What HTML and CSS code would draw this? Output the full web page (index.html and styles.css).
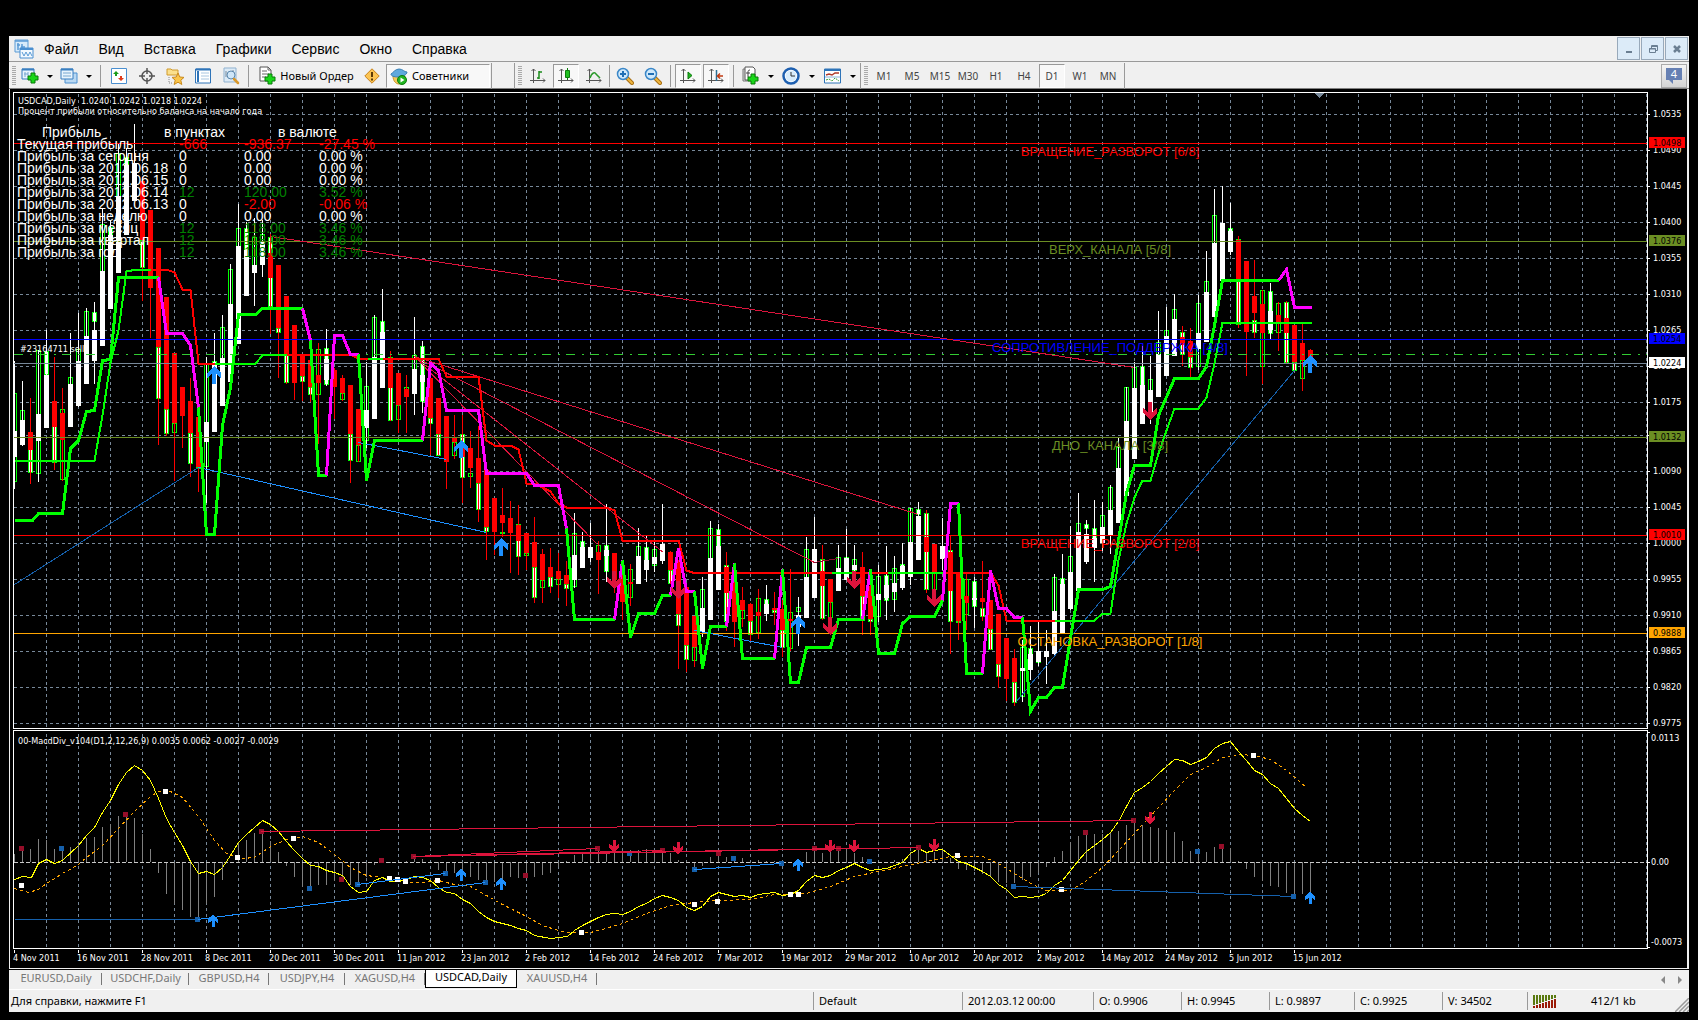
FILE: index.html
```html
<!DOCTYPE html>
<html lang="ru">
<head>
<meta charset="utf-8">
<title>USDCAD,Daily</title>
<link rel="stylesheet" href="styles.css">
</head>
<body>
<svg class="defs" width="0" height="0" aria-hidden="true">
  <defs>
    <symbol id="plus" viewBox="0 0 12 12"><path d="M4 1h4v3h3v4H8v3H4V8H1V4h3z" fill="#19d619" stroke="#087a08"/></symbol>
    <symbol id="axes" viewBox="0 0 16 16"><path d="M3.500 1v14M0 12.500h15M1.500 3l2-2 2 2M13 10.500l2 2-2 2" fill="none" stroke="#555"/></symbol>
    <symbol id="lens" viewBox="0 0 18 18"><path d="M11 11l5 5" stroke="#a86e12" stroke-width="4" stroke-linecap="round"/><path d="M11 11l5 5" stroke="#f0b840" stroke-width="2" stroke-linecap="round"/><circle cx="7" cy="7" r="5.500" fill="#cfe9fb" stroke="#3a87c8" stroke-width="1.500"/></symbol>
  </defs>
</svg>
<div class="window">
  <header class="menubar">
    <svg class="logo" viewBox="0 0 20 20"><path d="M1 1h13v12H1z" fill="#d8ebfa" stroke="#5a9bd5"/><path d="M1 2h13M4 4v7M8 5v6M3 6h3M7 8h4" stroke="#5a9bd5" stroke-width="1.500"/><path d="M6 9h13v10H6z" fill="#f2f9ff" stroke="#4a8fd0"/><path d="M6 10h13" stroke="#4a8fd0" stroke-width="2"/><path d="M8 13l2 4 2-4 2 4 2-4 2 4" fill="none" stroke="#5a9bd5"/></svg>
    <nav class="menu">
      <button>Файл</button><button>Вид</button><button>Вставка</button><button>Графики</button><button>Сервис</button><button>Окно</button><button>Справка</button>
    </nav>
    <div class="winbtns">
      <button aria-label="Свернуть"><svg width="22" height="22" viewBox="0 0 22 22"><path d="M8 14h6" stroke="#6b7f92" stroke-width="2"/></svg></button>
      <button aria-label="Восстановить"><svg width="22" height="22" viewBox="0 0 22 22"><path d="M9.500 10V7.500h6v5h-2M7.500 10.500h6v4h-6zM7 11h7M9 8.500h7" fill="none" stroke="#6b7f92"/></svg></button>
      <button aria-label="Закрыть"><svg width="22" height="22" viewBox="0 0 22 22"><path d="M8 8l6 6M14 8l-6 6" stroke="#6b7f92" stroke-width="2.500"/></svg></button>
    </div>
  </header>

  <div class="toolbar">
    <i class="grip"></i>
    <button class="tb slim" aria-label="Новый график"><svg width="18" height="18" viewBox="0 0 18 18"><path d="M1 2h12v10H1z" fill="#e8f4fd" stroke="#3a7fc0"/><path d="M1 2.500h12" stroke="#3a7fc0" stroke-width="2"/><path d="M4 5v5M3 7h4M7 5v4" stroke="#79a7d0"/><use href="#plus" x="6" y="5" width="12" height="12"/></svg></button><button class="drop" aria-label="Список"></button>
    <button class="tb slim" aria-label="Профили"><svg width="18" height="18" viewBox="0 0 18 18"><path d="M5 6h12v10H5z" fill="#b9d8f2" stroke="#4a8fd0"/><path d="M1 2h12v10H1z" fill="#e8f4fd" stroke="#3a7fc0"/><path d="M1 2.500h12" stroke="#3a7fc0" stroke-width="2"/><path d="M3 6h8M3 9h8" stroke="#79a7d0"/></svg></button><button class="drop" aria-label="Список"></button>
    <i class="sep first"></i>
    <button class="tb" aria-label="Обзор рынка"><svg width="16" height="18" viewBox="0 0 16 18"><path d="M.5 1.500h15v15H.5z" fill="#fff" stroke="#4a8fd0"/><path d="M5 4l3 3H6v2H4V7H2z" fill="#1a9c1a"/><path d="M10 14l-3-3h2V9h2v2h2z" fill="#e03c1c"/></svg></button>
    <button class="tb" aria-label="Окно данных"><svg width="16" height="16" viewBox="0 0 16 16"><circle cx="8" cy="8" r="5" fill="none" stroke="#555" stroke-width="1.500"/><path d="M8 0v6M8 10v6M0 8h6M10 8h6" stroke="#555" stroke-width="1.500"/></svg></button>
    <button class="tb" aria-label="Навигатор"><svg width="18" height="18" viewBox="0 0 18 18"><path d="M1 2h4l1 1h6v5H1z" fill="#fbe08c" stroke="#d09a2c"/><path d="M3 10v6h4" fill="none" stroke="#888" stroke-dasharray="1 1"/><path d="M12 6l1.800 4 4.200.400-3.200 2.800 1 4.300-3.800-2.300-3.800 2.300 1-4.300L6 10.400l4.200-.400z" fill="#fbc64a" stroke="#c98a1c"/></svg></button>
    <button class="tb" aria-label="Терминал"><svg width="16" height="16" viewBox="0 0 16 16"><path d="M.5 1h15v14H.5z" fill="#fff" stroke="#2f74b8"/><path d="M1 1.500h14" stroke="#2f74b8" stroke-width="2"/><path d="M3 3v11" stroke="#2f74b8" stroke-width="2"/><path d="M6 5h8M6 8h8M6 11h8" stroke="#a9c6e0"/></svg></button>
    <button class="tb" aria-label="Тестер стратегий"><svg width="18" height="18" viewBox="0 0 18 18"><path d="M2 1h12v14H2z" fill="#dceaf6" stroke="#8fb1cf"/><path d="M4 4v6M11 3v5" stroke="#789"/><circle cx="9" cy="8" r="4" fill="#cfe6f8" stroke="#5b87ad"/><path d="M12 12l4 4" stroke="#d8982c" stroke-width="2.500" stroke-linecap="round"/></svg></button>
    <i class="sep"></i>
    <button class="tb order"><svg width="18" height="19" viewBox="0 0 18 19"><path d="M2 1h8l3 3v11H2z" fill="#fff" stroke="#555"/><path d="M4 5h5M4 8h7M4 11h4M10 1v3h3" fill="none" stroke="#666"/><use href="#plus" x="6" y="7" width="12" height="12"/></svg>Новый Ордер</button>
    <button class="tb slim" aria-label="Редактор"><svg width="16" height="16" viewBox="0 0 16 16"><path d="M8 .8L15.200 8 8 15.200.800 8z" fill="#fbc453" stroke="#c8821a"/><path d="M8 4v5M8 10.500v2" stroke="#5b3a08" stroke-width="2"/></svg></button>
    <button class="tb experts pressed"><svg width="18" height="18" viewBox="0 0 18 18"><path d="M3 9c0 5 3 8 6 8s6-3 6-8z" fill="#f4c95a" stroke="#c8962c"/><path d="M1 7c2-1 4-5 8-5s5 3 8 3c0 3-5 5-9 5S1 9 1 7z" fill="#5fa9dd" stroke="#3a80b5"/><circle cx="12" cy="13" r="4.500" fill="#22b522" stroke="#0c7d0c"/><path d="M10.500 10.500v5l4-2.500z" fill="#fff"/></svg>Советники</button>
    <i class="line"></i><i class="blank"></i><i class="line"></i>
    <i class="grip"></i>
    <button class="tb" aria-label="Бары"><svg width="16" height="16" viewBox="0 0 16 16"><use href="#axes" width="16" height="16"/><path d="M9 3v8M9 4h3M7 10h2" stroke="#1a8a1a" stroke-width="1.500"/></svg></button>
    <button class="tb pressed" aria-label="Свечи"><svg width="16" height="16" viewBox="0 0 16 16"><use href="#axes" width="16" height="16"/><path d="M9.500 0v12" stroke="#0b7d0b"/><path d="M7.500 2.500h4v7h-4z" fill="#1fc01f" stroke="#0b7d0b"/></svg></button>
    <button class="tb" aria-label="Линия"><svg width="16" height="16" viewBox="0 0 16 16"><use href="#axes" width="16" height="16"/><path d="M4 10c2-6 5-6 6-4l4 4" fill="none" stroke="#2b9a2b" stroke-width="1.500"/></svg></button>
    <i class="sep tight"></i>
    <button class="tb" aria-label="Увеличить"><svg width="18" height="18" viewBox="0 0 18 18"><use href="#lens" width="18" height="18"/><path d="M4 7h6M7 4v6" stroke="#1f6fb5" stroke-width="2"/></svg></button>
    <button class="tb" aria-label="Уменьшить"><svg width="18" height="18" viewBox="0 0 18 18"><use href="#lens" width="18" height="18"/><path d="M4 7h6" stroke="#1f6fb5" stroke-width="2"/></svg></button>
    <i class="sep"></i>
    <button class="tb pressed" aria-label="Автопрокрутка"><svg width="16" height="16" viewBox="0 0 16 16"><use href="#axes" width="16" height="16"/><path d="M8 4v7l4-3.500z" fill="#22b522" stroke="#0c7d0c"/></svg></button>
    <button class="tb pressed" aria-label="Сдвиг графика"><svg width="16" height="16" viewBox="0 0 16 16"><use href="#axes" width="16" height="16"/><path d="M8.500 2v11" stroke="#2c6f94" stroke-width="1.500"/><path d="M15 8h-5M12 5.500L9.500 8l2.500 2.500" fill="none" stroke="#c03a12" stroke-width="1.500"/></svg></button>
    <i class="sep"></i>
    <button class="tb mid" aria-label="Индикаторы"><svg width="18" height="19" viewBox="0 0 18 19"><path d="M2 3h8v12H2z" fill="#ddd" stroke="#777"/><path d="M4 1h8l2 2v11H4z" fill="#fff" stroke="#555"/><path d="M9 4c-2 0-2 1-2 3v4M5 7h4" fill="none" stroke="#444"/><use href="#plus" x="6" y="7" width="12" height="12"/></svg></button><button class="drop" aria-label="Список"></button>
    <button class="tb mid" aria-label="Периоды"><svg width="18" height="18" viewBox="0 0 18 18"><circle cx="9" cy="9" r="7.500" fill="#fff" stroke="#1d5fb0" stroke-width="2.500"/><circle cx="9" cy="9" r="5.500" fill="#d8ecfb"/><path d="M9 5v4h4" fill="none" stroke="#333"/></svg></button><button class="drop" aria-label="Список"></button>
    <button class="tb mid" aria-label="Шаблоны"><svg width="17" height="16" viewBox="0 0 17 16"><path d="M.5 1h16v14H.5z" fill="#fff" stroke="#2f74b8"/><path d="M1 2h15" stroke="#2f74b8" stroke-width="2"/><path d="M2 7l3-1 3 1 3-2 4 0" fill="none" stroke="#b03a2a" stroke-width="1.500"/><path d="M2 12l3-1 3 2 3-3 4 3" fill="none" stroke="#3aa03a" stroke-dasharray="2 1"/><path d="M1 9h15" stroke="#8ab2da"/></svg></button><button class="drop" aria-label="Список"></button>
    <i class="line"></i>
    <i class="grip"></i>
    <div class="frames">
      <button>M1</button><button>M5</button><button>M15</button><button>M30</button><button>H1</button><button>H4</button><button class="pressed">D1</button><button>W1</button><button>MN</button>
    </div>
    <i class="line"></i>
    <button class="chat" aria-label="Сообщения: 4"><svg width="18" height="18" viewBox="0 0 18 18"><path d="M1 1h16v12H8v4l-4-4H1z" fill="#6680b3"/><text x="9" y="11" text-anchor="middle" class="chatnum">4</text></svg></button>
  </div>

  <main class="charts">
    <section class="pane price">
      <svg class="plot" id="price"></svg>
      <div class="quotes">USDCAD,Daily&nbsp; 1.0240 1.0242 1.0218 1.0224<br>Процент прибыли относительно баланса на начало года</div>
      <div class="profit">
        <div class="profit-head"><span>Прибыль</span><span>в пунктах</span><span>в валюте</span></div>
        <table>
          <tr><th>Текущая прибыль</th><td class="neg">-666</td><td class="neg">-936.37</td><td class="neg">-27.45 %</td></tr>
          <tr><th>Прибыль за сегодня</th><td>0</td><td>0.00</td><td>0.00 %</td></tr>
          <tr><th>Прибыль за 2012.06.18</th><td>0</td><td>0.00</td><td>0.00 %</td></tr>
          <tr><th>Прибыль за 2012.06.15</th><td>0</td><td>0.00</td><td>0.00 %</td></tr>
          <tr><th>Прибыль за 2012.06.14</th><td class="pos">12</td><td class="pos">120.00</td><td class="pos">3.52 %</td></tr>
          <tr><th>Прибыль за 2012.06.13</th><td>0</td><td class="neg">-2.00</td><td class="neg">-0.06 %</td></tr>
          <tr><th>Прибыль за неделю</th><td>0</td><td>0.00</td><td>0.00 %</td></tr>
          <tr><th>Прибыль за месяц</th><td class="pos">12</td><td class="pos">118.00</td><td class="pos">3.46 %</td></tr>
          <tr><th>Прибыль за квартал</th><td class="pos">12</td><td class="pos">118.00</td><td class="pos">3.46 %</td></tr>
          <tr><th>Прибыль за год</th><td class="pos">12</td><td class="pos">118.00</td><td class="pos">3.46 %</td></tr>
        </table>
      </div>
    </section>
    <svg class="scale price-scale" id="priceScale"></svg>
    <section class="pane macd">
      <svg class="plot" id="macd"></svg>
      <div class="quotes">00-MacdDiv_v104(D1,2,12,26,9) 0.0035 0.0062 -0.0027 -0.0029</div>
    </section>
    <svg class="scale macd-scale" id="macdScale"></svg>
    <div class="dates">
      <span>4 Nov 2011</span><span>16 Nov 2011</span><span>28 Nov 2011</span><span>8 Dec 2011</span><span>20 Dec 2011</span><span>30 Dec 2011</span><span>11 Jan 2012</span><span>23 Jan 2012</span><span>2 Feb 2012</span><span>14 Feb 2012</span><span>24 Feb 2012</span><span>7 Mar 2012</span><span>19 Mar 2012</span><span>29 Mar 2012</span><span>10 Apr 2012</span><span>20 Apr 2012</span><span>2 May 2012</span><span>14 May 2012</span><span>24 May 2012</span><span>5 Jun 2012</span><span>15 Jun 2012</span>
    </div>
  </main>

  <nav class="tabs">
    <button class="w92">EURUSD,Daily</button><button class="w87">USDCHF,Daily</button><button class="w80">GBPUSD,H4</button><button class="w76">USDJPY,H4</button><button class="w80">XAGUSD,H4</button><button class="w92 active">USDCAD,Daily</button><button class="w80">XAUUSD,H4</button>
    <div class="scroll"><button aria-label="Влево"><svg width="5" height="8" viewBox="0 0 5 8"><path d="M4 0v8L0 4z" fill="#888"/></svg></button><button aria-label="Вправо"><svg width="5" height="8" viewBox="0 0 5 8"><path d="M1 0v8l4-4z" fill="#888"/></svg></button></div>
  </nav>
  <footer class="status">
    <span class="help">Для справки, нажмите F1</span>
    <span class="c148">Default</span><span class="c130">2012.03.12 00:00</span><span class="c88">O: 0.9906</span><span class="c88">H: 0.9945</span><span class="c84">L: 0.9897</span><span class="c88">C: 0.9925</span><span class="c84">V: 34502</span>
    <span class="net"><svg id="signal" width="24" height="13"></svg>412/1 kb</span>
    <svg class="resize" width="14" height="14" viewBox="0 0 14 14"><path d="M0 14L14 0M4 14L14 4M8 14l6-6M12 14l2-2" stroke="#999" stroke-width="1.500"/></svg>
  </footer>
</div>
<script src="chart.js"></script>
</body>
</html>
```
FILE: styles.css
```css
* { box-sizing: border-box; }
body { margin: 0; padding: 36px 9px 9px; background: #000; font: 11px/14px "Noto Sans", Tahoma, sans-serif; color: #000; }
button { margin: 0; padding: 0; border: 0; background: none; font: inherit; color: inherit; }
.defs { position: absolute; }
svg { display: block; flex: none; }
.window { background: #f0f0f0; }

.menubar { display: flex; align-items: center; height: 26px; border-bottom: 1px solid #999; }
.logo { width: 20px; height: 20px; margin-left: 5px; }
.menu { display: flex; flex: 1; font: 14px/20px "Liberation Sans", Arial, sans-serif; }
.menu button { padding: 0 10px; }
.winbtns { display: flex; gap: 1px; padding-right: 1px; }
.winbtns button { width: 23px; height: 23px; border: 1px solid #98a9ba; background: #dcebf8; }

.toolbar { display: flex; align-items: center; height: 27px; padding-top: 1px; border-bottom: 1px solid #808080; }
.grip { width: 4px; height: 20px; margin: 0 2px 0 3px; background: repeating-linear-gradient(#aaa 0 1px, #f0f0f0 1px 2px); }
.tb { display: flex; align-items: center; justify-content: center; flex: none; width: 28px; height: 24px; white-space: nowrap; }
.tb.slim { width: 24px; }
.tb.mid { width: 26px; }
.tb.order { width: 108px; gap: 4px; }
.tb.experts { width: 104px; gap: 4px; justify-content: flex-start; margin: 0 1px 0 2px; padding-left: 3px; }
.tb.pressed, .frames .pressed { background: #f8f8f8; border: 1px solid; border-color: #999 #fff #fff #999; }
.tb.pressed:not(.experts) { width: 26px; margin: 0 1px; }
.drop { flex: none; width: 15px; height: 24px; }
.drop::before { content: ""; display: block; width: 0; margin: 1px auto 0; border: 3px solid transparent; border-top-color: #000; border-bottom: 0; }
.sep { flex: none; width: 1px; height: 22px; margin: 0 3px; background: #999; }
.sep.first { margin: 0 4px; }
.sep.tight { margin: 0 1px; }
.line { flex: none; width: 1px; height: 26px; background: #999; }
.blank { flex: none; width: 22px; }
.frames { display: flex; font-size: 10px; color: #444; }
.frames button { width: 26px; height: 24px; margin: 0 1px; }
.frames + .line { margin-left: 2px; }
.chat { display: flex; align-items: center; justify-content: center; width: 26px; height: 24px; margin: 0 2px 0 auto; border: 1px solid #aaa; background: linear-gradient(#f4f4f4, #d4d4d4); }
.chatnum { font: 11px "Noto Sans", sans-serif; fill: #fff; }

.charts { display: grid; grid-template-columns: 1fr 39px; row-gap: 1px; padding: 3px 0 0 3px; border: solid #f0f0f0; border-width: 0 2px 1px 1px; background: #000; color: #fff; font: 9px/10px "DejaVu Sans Condensed", "Noto Sans", sans-serif; }
.pane { position: relative; border: 1px solid #fff; overflow: hidden; }
.price, .price-scale { height: 637px; }
.macd, .macd-scale { height: 219px; }
.plot { width: 100%; height: 100%; }
.scale { width: 39px; }
.plot, .scale { shape-rendering: crispEdges; }
.plot text { font: 13px "Liberation Sans", Arial, sans-serif; }
.plot .note, .scale text { font: 9px "DejaVu Sans Condensed", "Noto Sans", sans-serif; }
.quotes { position: absolute; left: 4px; top: 3px; white-space: nowrap; }
.macd .quotes { top: 5px; }
.profit { position: absolute; left: 3px; top: 31px; font: 14px/12px "Liberation Sans", Arial, sans-serif; white-space: nowrap; }
.profit-head { display: flex; height: 14px; padding-left: 25px; line-height: 16px; }
.profit-head span { width: 114px; }
.profit-head span:first-child { width: 122px; }
.profit table { border-collapse: collapse; }
.profit th, .profit td { height: 12px; padding: 0; font-weight: 400; text-align: left; }
.profit th { width: 162px; }
.profit td { width: 65px; }
.profit td:nth-child(3) { width: 75px; }
.neg { color: #f00; }
.pos { color: #008000; }
.dates { grid-column: 1 / -1; display: flex; height: 18px; overflow: hidden; }
.dates span { flex: none; width: 64px; white-space: nowrap; }
.dates span::before { content: ""; display: block; width: 1px; height: 3px; margin-left: 1px; background: #fff; }

.tabs { display: flex; height: 20px; padding-left: 1px; border-top: 1px solid #000; background: #f0f0f0; color: #777; }
.tabs > button { position: relative; flex: none; height: 18px; padding-bottom: 3px; }
.tabs > button:not(.active)::after { content: ""; position: absolute; right: 0; top: 3px; width: 1px; height: 12px; background: #777; }
.tabs .active { border: 1px solid #000; border-top: 0; background: #fff; color: #000; }
.w92 { width: 92px; }
.w87 { width: 87px; }
.w80 { width: 80px; }
.w76 { width: 76px; }
.scroll { display: flex; gap: 11px; align-items: center; margin-left: auto; padding-right: 7px; }

.status { display: flex; position: relative; align-items: center; height: 23px; border-top: 1px solid #fff; }
.status span { flex: none; height: 18px; padding-left: 5px; border-left: 1px solid #999; line-height: 18px; white-space: nowrap; }
.status .help { flex: 1; padding-left: 2px; border: 0; }
.status .c148 { width: 149px; }
.status .c130 { width: 131px; }
.status .c88 { width: 88px; }
.status .c84 { width: 85px; }
.status .net { display: flex; gap: 34px; align-items: center; width: 162px; }
.resize { position: absolute; right: 0; bottom: 0; }
```
FILE: chart.js
```js
const NS = 'http://www.w3.org/2000/svg';
const el = (parent, name, attrs, text) => {
  const n = document.createElementNS(NS, name);
  for (const k in attrs) n.setAttribute(k, attrs[k]);
  if (text) n.textContent = text;
  parent.appendChild(n);
  return n;
};
const rect = (g, x, y, w, h, fill) => el(g, 'rect', { x, y, width: w, height: h, fill });
const layer = (id, x, y) => el(document.getElementById(id), 'g', { transform: `translate(${x} ${y})` });
const LEFT = 14, STEP = 8, FAR = 4000;

// Colour, wick top/bottom, body top/bottom, then bar top/bottom and
// f (falling bar, filled) or h (rising bar, hollow).
const candles = `
W 361 489 431 457 393 482 h;W 381 446 420 445 410 445 h;R 398 484 432 450 432 473 f;W 350 482 414 441 350 474 h
W 330 428 375 428 351 375 f;R 357 470 401 427 401 463 f;R 388 481 413 440 409 480 h;W 333 427 384 427 377 427 h
W 313 407 361 406 349 406 h;W 308 384 336 384 311 384 h;W 302 384 330 361 312 322 f;W 208 346 271 346 224 346 h
W 220 309 235 309 227 309 f;W 143 273 196 273 153 273 h;W 148 235 165 235 157 235 f;W 124 201 163 201
R 177 301 181 240 240 268 f;R 210 338 210 288;R 248 445 248 347 347 399 f;R 297 436 297 409 409 434 f
R 353 481 353 423 423 433 h;R 387 448 387 416;R 378 477 401 433 433 464 f;R 417 492 417 467 467 469 f
W 357 503 422 442 364 467 h;W 333 432 365 432 361 432 f;W 315 406 358 406 327 406 h;W 264 382 304 382 269 382 h
W 204 344 246 344 228 344 h;W 222 296 250 296 228 296 f;W 218 306 265 273 237 273 h;W 220 277 242 265 234 265 h
R 234 334 253 278 237 307 f;R 265 378 265 328 328 333 f;R 296 384 296 354 354 383 f;R 325 400 325 383
R 354 401 354 376 376 382 f;R 359 402 360 387 387 395 f;R 343 444 375 383 349 395 h;W 329 386 359 380 348 385 f
R 368 419 370 387;R 375 401 378 393 393 400 h;R 385 483 385 434 434 461 f;R 409 462 409 445 445 462 h
W 362 448 410 428 386 441 h;W 315 419 357 419 317 419 h;W 289 388 332 388 321 388 f;R 351 421 359 388 357 421 f
R 373 433 373 405 405 420 h;R 375 433 389 397 387 397 h;W 317 415 369 394 355 394 h;W 341 413 375 382 346 402 f
R 378 455 378 418 418 424 f;R 398 455 398 434 434 456 f;R 416 489 416 462;R 415 459 438 442 442 456 h
R 415 503 445 457 434 478 f;R 431 488 448 468 473 477 h;R 426 522 458 483 483 510 f;R 470 560 470 527 527 532 f
R 498 555 498 532;R 488 537 515 523 532 534 h;R 501 573 518 533;R 505 575 525 541 524 557 f
R 533 570 533 553 553 556 h;R 517 603 542 567 567 598 f;R 549 603 554 580 580 588 h;R 548 593 567 577 577 587 f
R 553 598 571 579 579 585 h;R 561 606 575 584 584 589 f;W 513 588 555 580 533 587 h;W 532 568 547 568 541 568 f
W 523 562 547 558;R 541 594 552 560 545 560 h;W 504 582 550 556 545 572 f;R 553 593 553 580
R 567 620 567 602;R 564 606 582 584 569 598 h;W 528 584 556 584 546 584 h;W 536 582 560 570 547 570 f
W 540 572 557 564 549 566 h;W 504 564 544 561;R 551 584 552 570 570 584 f;R 560 669 562 614 614 626 f
R 587 672 587 645 645 660 f;R 616 667 616 647 647 661 h;W 577 637 608 632 589 632 h;W 521 620 558 620 528 620 h
W 524 590 546 590 529 590 f;R 552 631 567 593 565 622 f;R 580 647 580 622;R 587 627 600 610 610 619 h
R 603 641 604 621 621 635 f;R 589 639 612 616 598 633 h;W 585 621 604 614 599 614 f;R 592 625 608 610 610 613 f
R 600 657 609 630 630 648 f;R 569 651 619 621 612 649 h;W 597 646 615 627 607 612 h;W 537 618 577 618 549 618 h
W 517 598 549 598;R 545 620 571 586 559 619 f;R 579 620 579 602 602 618 h;W 545 591 568 591 557 591 h
W 529 580 558 580 557 580 f;W 545 575 565 570 559 571 h;R 552 635 567 596 596 621 f;R 580 635 586 619 619 622 f
W 565 622 594 600 576 617 h;W 546 620 585 598 575 601 f;W 556 612 583 592 568 600 h;W 543 590 566 588 564 588 f
W 508 585 542 577 508 577 h;W 502 560 516 560 509 515 f;R 510 593 537 552 513 590 f;R 544 590 544 573 573 590 h
W 518 570 546 559;R 535 654 552 591 550 622 f;R 573 640 573 621 621 623 f;R 573 630 596 603 579 615 h
W 577 628 598 600 581 607 f;R 561 621 598 602 608 617 f;R 600 650 600 629 629 650 f;R 614 688 614 664 664 677 f
R 638 701 638 679;R 649 706 658 682 682 703 f;W 640 702 668 671 647 697 h;W 626 680 654 670 648 670 f
W 621 666 651 662 651 663 f;W 630 684 651 657;W 574 655 611 654 577 654 h;W 554 633 584 633 578 633 f
W 526 610 572 609 556 609 h;W 493 591 532 591 523 591 h;W 520 564 534 562 524 529 f;W 500 582 538 548 528 548 f
W 502 551 527 543 515 543 h;W 485 554 510 535 487 535 h;W 438 523 468 523 447 523 h;W 387 496 421 496 387 496 h
W 362 459 388 459 367 459 h;W 346 424 385 424 366 424 f;W 356 424 390 414 379 414 h;W 311 397 354 397 342 397 h
W 307 376 336 376 330 376 h;W 294 356 319 356 309 356 h;R 326 366 337 345 332 355 f;R 328 377 341 357 357 368 f
W 295 370 333 349 303 367 h;W 251 342 292 342 281 342 h;W 189 317 243 317 215 317 h;W 186 281 223 281
W 203 255 231 252 228 252 f;R 236 328 240 281 239 325 f;R 261 376 261 332;R 260 338 296 313 320 333 f
R 290 384 304 333 290 367 h;W 283 339 311 330 291 334 f;R 302 351 315 322 303 333 h;R 301 363 318 333 302 363 f
R 325 370 325 362 362 371 f;R 323 391 343 360 360 379 h;R 349 358 350 358`.trim().split(/[;\n]/).map(s => s.split(' '));

const fast = [
  ['L', '14,520 32,520 38,513 62,513 70,448 78,440 86,411 94,410 102,360 110,359 118,277 158,277'],
  ['M', '158,277 166,333 182,333 190,345 198,407'],
  ['L', '198,407 206,534 214,534 222,425 230,387 238,314 255,314 262,308 302,308'],
  ['M', '302,308 310,340'], ['L', '310,340 318,475 326,475'],
  ['M', '326,475 334,335 342,335 350,354 358,354'], ['L', '358,354 366,480 374,440 422,440'],
  ['M', '422,440 430,363 438,370 446,410 478,410 486,473 526,473 534,485 558,485 566,528'],
  ['L', '566,528 574,619 614,619'], ['M', '614,619 622,560'],
  ['L', '622,560 630,637 638,613 654,613 662,595 670,595'], ['M', '670,595 678,548 686,591 694,591'],
  ['L', '694,591 702,668 710,626 726,626'], ['M', '726,626 734,563'], ['L', '734,563 742,658 774,658'],
  ['M', '774,658 782,569'], ['L', '782,569 790,682 798,682 806,647 830,647 838,619 862,619'],
  ['M', '862,619 870,569'], ['L', '870,569 878,653 894,653 902,623 910,616 934,616 942,600'],
  ['M', '942,600 950,503 958,503'], ['L', '958,503 966,673 982,673'],
  ['M', '982,673 990,570 998,608 1006,608 1014,617 1022,617'],
  ['L', '1022,617 1030,711 1038,697 1046,697 1054,687 1062,687 1078,589 1102,589 1110,586 1118,540 1126,493 1134,465 1150,465 1158,415 1174,378 1198,378 1206,366 1214,325 1222,280 1278,280'],
  ['M', '1278,280 1286,269 1294,307 1311,307']
];
const slow = [
  ['L', '14,460 94,460 102,415 110,362 118,330 126,271 136,269 150,269'],
  ['R', '150,269 166,269 174,272 182,289 190,289 198,363 214,363'],
  ['L', '214,363 255,363 263,354 286,354'], ['R', '286,354 350,354 358,358 367,358'], ['L', '367,358 382,358'],
  ['R', '382,358 438,358 446,376 478,376 486,440 494,445 510,445 518,449 526,483 534,483 550,491 558,503 566,507 606,507 614,510 622,540 678,540 686,570 692,572 831,572'],
  ['L', '831,572 854,572'], ['R', '854,572 887,572'], ['L', '887,572 942,572'],
  ['R', '942,572 990,572 998,585 1006,620 1054,620'],
  ['L', '1054,620 1094,620 1102,613 1110,613 1118,560 1126,523 1134,497 1142,480 1150,480 1158,453 1166,430 1174,408 1198,408 1206,397 1214,363 1222,322 1311,322']
];
const hue = { L: '#00ff00', M: '#ff00ff', R: '#ff0000' };
const GRID = '#778899', CRIMSON = '#dc143c', BLUE = '#1e90ff', NAVY = '#1560ac';

const poly = (g, points, stroke, width, extra = {}) =>
  el(g, 'polyline', { points, fill: 'none', stroke, 'stroke-width': width, transform: 'translate(.5 .5)', ...extra });
const seg = (g, list, stroke) => list.forEach(p => poly(g, p, stroke, 1));
const gridV = (g, top, h) => {
  for (let x = 46; x < FAR; x += 32)
    el(g, 'path', { d: `M${x}.5 ${top}v${h}`, stroke: GRID, 'stroke-dasharray': '3 3' });
};
const arrow = (g, x, y, s, up) => el(g, 'path', {
  d: s > 15 ? 'M0 0L7 7V12L2 8V18H-2V8L-7 12V7Z' : 'M0 0L5 6V9L2 7V13H-1V7L-5 9V6Z',
  fill: up ? BLUE : CRIMSON, transform: `translate(${x} ${up ? y : y + s}) scale(1 ${up ? 1 : -1})`
});

// Price pane
const p = layer('price', -LEFT, -93);
const prices = [];
for (let i = 0; i < 18; i++) prices.push([114 + 36 * i - (i > 8 ? 3 : 0), (1.0535 - 0.0045 * i + (i > 8 ? 0.0005 : 0)).toFixed(4)]);
gridV(p, 94, 634);
prices.forEach(([y]) => el(p, 'path', { d: `M14 ${y}.5H${FAR}`, stroke: GRID, 'stroke-dasharray': '3 3' }));
candles.forEach(([c, wt, wb, bt, bb, gt, gb, kind], i) => {
  const x = LEFT + i * STEP, col = c === 'W' ? '#fff' : '#f00';
  if (kind) el(p, 'rect', { x: x - 1.5, y: +gt + .5, width: 4, height: Math.max(gb - gt - 1, 1), fill: kind === 'f' ? '#fff' : '#000', stroke: '#00ff00' });
  rect(p, x, wt, 1, wb - wt, col);
  rect(p, x - 2, bt, 5, bb - bt, col);
});
[[143, '#f00'], [241, '#6b8e23'], [339, '#00f'], [363, GRID], [437, '#6b8e23'], [535, '#f00'], [633, '#ffa500']]
  .forEach(([y, c]) => rect(p, LEFT, y, FAR, 1, c));
el(p, 'path', { d: `M14 354.500H${FAR}`, stroke: '#32cd32', 'stroke-dasharray': '9 7 2 6' });
seg(p, ['270,236 1134,367', '414,356 597,544', '414,356 663,552', '414,356 814,562', '414,356 918,514'], CRIMSON);
seg(p, ['814,562 838,558'], '#8b1030');
seg(p, ['198,467 486,532', '358,442 446,459', '694,630 782,647'], BLUE);
seg(p, ['14,584 198,467', '1015,702 1294,370'], NAVY);
slow.forEach(([c, pts]) => poly(p, pts, hue[c], 2));
fast.forEach(([c, pts]) => poly(p, pts, hue[c], 3));
[[214, 366], [461, 440], [501, 538], [798, 616], [1310, 355]].forEach(a => arrow(p, ...a, 18, true));
[[614, 571], [678, 581], [854, 571], [830, 617], [934, 589], [1150, 402]].forEach(a => arrow(p, ...a, 18, false));
[['ВРАЩЕНИЕ_РАЗВОРОТ [6/8]', 156, '#f00'], ['ВЕРХ_КАНАЛА [5/8]', 254, '#6b8e23'], ['СОПРОТИВЛЕНИЕ_ПОДДЕРЖКА [4/8]', 352, '#00f'],
 ['ДНО_КАНАЛА [3/8]', 450, '#6b8e23'], ['ВРАЩЕНИЕ_РАЗВОРОТ [2/8]', 548, '#f00'], ['ОСТАНОВКА_РАЗВОРОТ [1/8]', 646, '#ffa500']]
  .forEach(([t, y, fill]) => el(p, 'text', { x: 1110, y, fill, 'text-anchor': 'middle' }, t));
el(p, 'text', { x: 20, y: 352, fill: '#fff', class: 'note' }, '#23164711 sell');
el(p, 'path', { d: 'M1314 93h10l-5 5z', fill: GRID });

// Price scale
const ps = layer('priceScale', 0, -92);
prices.forEach(([y, t]) => { rect(ps, 0, y, 2, 1, '#fff'); el(ps, 'text', { x: 5, y: y + 3, fill: '#fff' }, t); });
[[143, '#f00', '1.0498', '#000'], [241, '#6b8e23', '1.0376', '#000'], [339, '#00f', '1.0254', '#000'], [363, '#fff', '1.0224', '#000'],
 [437, '#6b8e23', '1.0132', '#000'], [535, '#f00', '1.0010', '#000'], [633, '#ffa500', '0.9888', '#000']]
  .forEach(([y, bg, t, fill]) => { rect(ps, 1, y - 6, 36, 11, bg); el(ps, 'text', { x: 5, y: y + 3, fill }, t); });

// MACD pane
const m = layer('macd', -LEFT, -731);
gridV(m, 734, 214);
const bars = [854,851,849,839,840,849,848,847,843,838,837,827,824,816,815,818,834,849,873,894,904,910,917,920,904,897,880,862,842,840,833,832,841,852,866,877,887,887,885,885,881,877,885,886,877,865,862,863,862,861,858,859,862,870,873,873,875,877,880,882,882,880,877,878,877,877,875,873,867,861,855,853,851,850,852,850,850,850,850,849,851,852,853,860,861,868,866,857,853,857,857,858,863,860,861,861,865,862,862,852,850,853,852,848,848,853,857,862,863,862,860,859,852,848,853,852,850,858,869,870,871,874,877,882,883,883,880,877,873,867,857,851,842,836,833,834,834,832,831,825,823,825,827,828,830,832,841,851,853,852,847,848,848,861,869,877,881,886,887,893,895,894,892];
bars.forEach((y, i) => rect(m, LEFT + i * STEP, Math.min(y, 862), 1, Math.abs(y - 862), '#808080'));
el(m, 'path', { d: `M14 862.500H${FAR}`, stroke: '#c8c8c8', 'stroke-dasharray': '4 2' });
poly(m, '14,888 28,892 38,889 46,883 62,873 78,864 86,857 102,845 118,828 134,811 150,796 158,791 168,790 182,797 198,816 214,840 226,853 242,858 254,857 270,846 286,839 302,836 318,842 334,854 350,867 366,875 382,877 398,880 406,882 422,882 438,880 454,884 470,886 486,895 502,904 526,916 542,925 558,930 566,932 590,932 598,930 622,923 646,913 670,905 694,902 718,900 750,899 774,894 806,893 830,886 854,876 878,871 902,866 926,861 950,856 982,856 998,863 1014,873 1030,883 1046,890 1070,890 1086,880 1102,867 1118,850 1134,833 1142,824 1158,807 1174,790 1190,774 1206,767 1222,757 1238,754 1254,755 1270,759 1286,770 1298,780 1307,788', '#ffa500', 1, { 'stroke-dasharray': '3 3' });
poly(m, '14,879 22,876 31,877 38,863 46,859 54,863 62,860 78,845 86,835 94,827 102,812 110,800 118,784 126,772 134,765 142,770 150,780 158,798 166,818 174,832 182,845 190,861 198,873 206,871 214,874 222,867 230,855 238,842 246,834 254,827 262,820 270,824 278,831 286,841 294,850 302,858 310,865 318,866 326,870 334,872 342,875 350,886 358,892 366,891 374,880 382,877 390,881 398,881 406,879 414,876 422,877 430,880 438,887 446,892 454,893 462,899 470,903 478,911 486,917 494,921 502,923 510,925 518,928 526,930 534,935 550,938 567,936 574,930 582,925 590,921 598,917 606,914 614,913 622,914 630,911 638,906 646,903 654,898 662,895 670,897 678,900 686,907 694,910 702,906 710,896 718,892 726,894 734,896 742,895 750,897 758,894 774,892 782,895 790,894 798,890 806,881 814,875 822,877 830,875 838,870 846,867 854,863 862,867 870,870 878,869 886,868 894,865 902,862 910,853 918,848 926,852 934,850 942,849 950,855 958,861 966,863 974,867 982,871 990,876 998,884 1006,889 1014,897 1022,896 1030,897 1038,896 1046,893 1054,885 1062,880 1070,870 1078,860 1086,851 1094,845 1102,839 1110,832 1118,821 1126,806 1134,792 1142,787 1150,781 1158,773 1166,766 1174,759 1182,760 1190,764 1198,761 1206,757 1214,748 1222,743 1230,741 1238,751 1246,760 1254,770 1262,774 1270,783 1278,788 1294,808 1302,815 1310,821', '#ffff00', 1);
const dots = (list, c) => list.forEach(([x, y]) => rect(m, x - 2, y - 2, 5, 5, c));
dots([[21,885],[165,791],[237,857],[293,838],[389,878],[397,879],[405,881],[437,880],[581,932],[694,904],[717,901],[790,894],[798,894],[957,855],[1061,889],[1253,755]], '#fff');
dots([[21,848],[125,814],[261,831],[341,879],[381,860],[413,856],[525,875],[597,848],[662,850],[718,853],[814,848],[838,848],[918,847],[1085,832],[1133,820],[1221,846]], '#960e29');
dots([[61,848],[197,919],[309,888],[357,884],[445,873],[485,882],[629,853],[694,869],[733,858],[781,863],[869,861],[1013,886],[1197,851],[1293,896]], NAVY);
seg(m, ['261,831 1133,820', '413,856 597,848', '413,856 662,850', '413,856 838,848', '413,856 918,847'], CRIMSON);
seg(m, ['197,919 485,882', '357,884 445,873', '694,869 781,863'], BLUE);
seg(m, ['14,919 197,919', '1013,886 1293,896'], NAVY);
[[213, 914], [461, 868], [501, 877], [798, 858], [1310, 891]].forEach(a => arrow(m, ...a, 13, true));
[[614, 840], [678, 842], [830, 840], [854, 840], [934, 839], [1150, 812]].forEach(a => arrow(m, ...a, 13, false));

// MACD scale
const ms = layer('macdScale', 0, -730);
[[741, '0.0113'], [865, '0.00'], [945, '-0.0073']].forEach(([y, t]) => el(ms, 'text', { x: 3, y, fill: '#fff' }, t));
[732, 862, 947].forEach(y => rect(ms, 0, y, 2, 1, '#fff'));

// Connection indicator
const s = document.getElementById('signal');
for (let i = 0; i < 8; i++) {
  rect(s, i * 3, 0, 2, 10 - i, '#5a7a10');
  rect(s, i * 3, 11 - i, 2, 2 + i, '#9a1c08');
}
```
